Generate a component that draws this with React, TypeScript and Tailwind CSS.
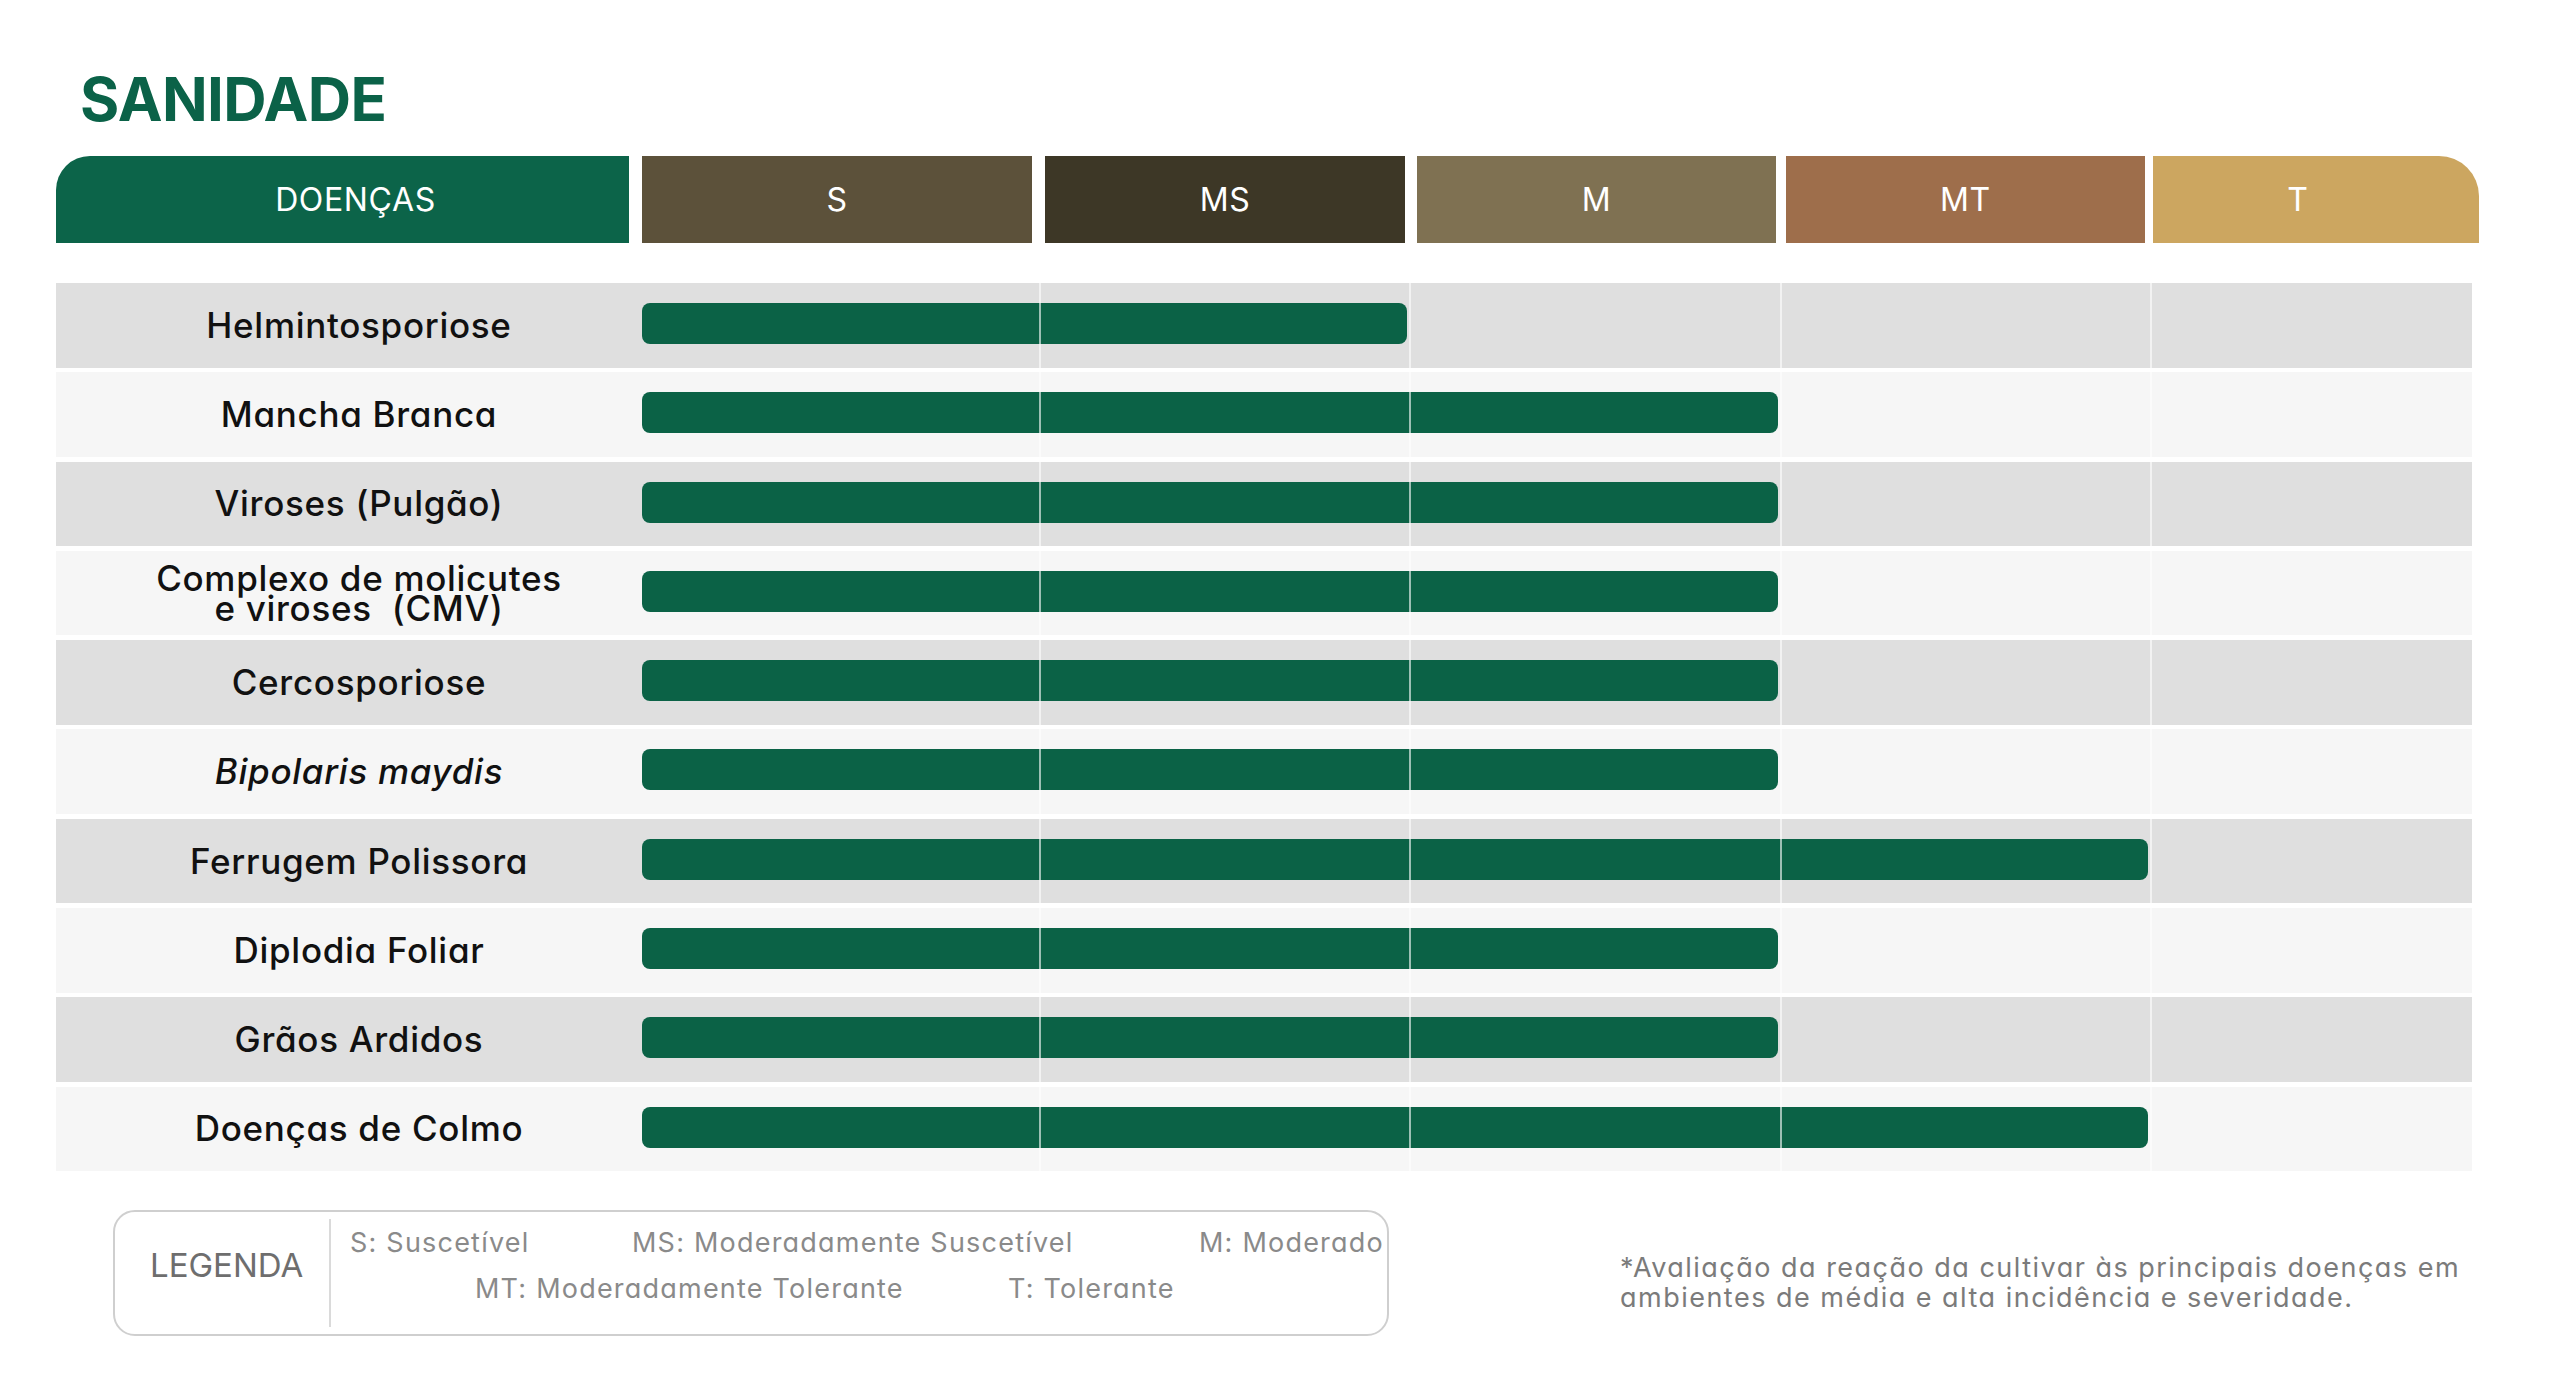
const font = "font-['Inter','Liberation_Sans',sans-serif] [font-feature-settings:'cv11']";

const rows = [
  { name: "Helmintosporiose", level: 2 },
  { name: "Mancha Branca", level: 3 },
  { name: "Viroses (Pulgão)", level: 3 },
  { name: "Complexo de molicutes", second: "e viroses\u00a0 (CMV)", level: 3 },
  { name: "Cercosporiose", level: 3 },
  { name: "Bipolaris maydis", level: 3, italic: true },
  { name: "Ferrugem Polissora", level: 4 },
  { name: "Diplodia Foliar", level: 3 },
  { name: "Grãos Ardidos", level: 3 },
  { name: "Doenças de Colmo", level: 4 },
];

const span: Record<number, string> = {
  2: "col-span-2",
  3: "col-span-3",
  4: "col-span-4",
  5: "col-span-5",
};

function Row({ row, index }: { row: (typeof rows)[number]; index: number }) {
  return (
    <div className={`flex h-[84.5px] ${index % 2 === 0 ? "bg-[#dfdfdf]" : "bg-[#f6f6f6]"}`}>
      <div className="flex w-[586px] items-center justify-center pl-[20px] text-center">
        {row.second ? (
          <div className="text-[35px] font-medium leading-[30px] tracking-[0.02em] text-[#111]">
            <div>{row.name}</div>
            <div>{row.second}</div>
          </div>
        ) : (
          <div
            className={`text-[35px] font-medium leading-none tracking-[0.02em] text-[#111] ${row.italic ? "italic" : ""}`}
          >
            {row.name}
          </div>
        )}
      </div>
      <div className="grid h-full w-[1830px] grid-cols-[397px_370px_371px_370px_322px] grid-rows-1">
        <div
          className={`col-start-1 row-start-1 ${span[row.level]} mr-[2px] mt-[20px] h-[41px] self-start rounded-[8px] bg-[#0b6246]`}
        />
        <div className="col-start-2 row-start-1 border-l-2 border-white/60" />
        <div className="col-start-3 row-start-1 border-l-2 border-white/60" />
        <div className="col-start-4 row-start-1 border-l-2 border-white/60" />
        <div className="col-start-5 row-start-1 border-l-2 border-white/60" />
      </div>
    </div>
  );
}

export default function App() {
  return (
    <div className={`min-h-[1376px] w-[2560px] bg-white pt-[69px] ${font}`}>
      <h1 className="ml-[80px] text-[60px] font-bold leading-none tracking-[-0.01em] text-[#0b6248]">SANIDADE</h1>

      {/* header */}
      <div className="ml-[56px] mt-[27px] flex h-[87px] text-[32px] leading-none tracking-[0.02em] text-white">
        <div className="flex w-[573px] items-center justify-center rounded-tl-[34px] bg-[#0c6449] pl-[26px]">DOENÇAS</div>
        <div className="ml-[13px] flex w-[390px] items-center justify-center bg-[#5c513a]">S</div>
        <div className="ml-[13px] flex w-[360px] items-center justify-center bg-[#3d3726]">MS</div>
        <div className="ml-[12px] flex w-[359px] items-center justify-center bg-[#7f7152]">M</div>
        <div className="ml-[10px] flex w-[359px] items-center justify-center bg-[#9e6e4b]">MT</div>
        <div className="ml-[8px] flex w-[326px] items-center justify-center rounded-tr-[40px] bg-[#cca660] pr-[36px]">T</div>
      </div>

      {/* rows */}
      <div className="ml-[56px] mt-[40px] flex w-[2416px] flex-col gap-[4.8px]">
        {rows.map((r, i) => (
          <Row key={r.name} row={r} index={i} />
        ))}
      </div>

      {/* legend + note */}
      <div className="ml-[113px] mt-[39px] flex items-start">
        <div className="flex h-[126px] w-[1276px] rounded-[22px] border-2 border-[#cfcfcf]">
          <div className="w-[214px] pl-[35px] pt-[36.5px] text-[33px] leading-none text-[#6e6e6e]">LEGENDA</div>
          <div className="mt-[7px] h-[108px] w-[2px] bg-[#dadada]" />
          <div className="flex flex-col gap-[19px] pt-[17px] text-[27px] leading-none tracking-[0.045em] text-[#8a8a8a]">
            <div className="flex whitespace-nowrap">
              <span className="ml-[19px] w-[282px]">S: Suscetível</span>
              <span className="w-[567px]">MS: Moderadamente Suscetível</span>
              <span>M: Moderado</span>
            </div>
            <div className="flex whitespace-nowrap">
              <span className="ml-[144px] w-[533px]">MT: Moderadamente Tolerante</span>
              <span>T: Tolerante</span>
            </div>
          </div>
        </div>
        <p className="ml-[231px] mt-[43px] whitespace-nowrap text-[27px] leading-[30px] tracking-[0.055em] text-[#7b7b7b]">
          *Avaliação da reação da cultivar às principais doenças em
          <br />
          ambientes de média e alta incidência e severidade.
        </p>
      </div>
    </div>
  );
}
